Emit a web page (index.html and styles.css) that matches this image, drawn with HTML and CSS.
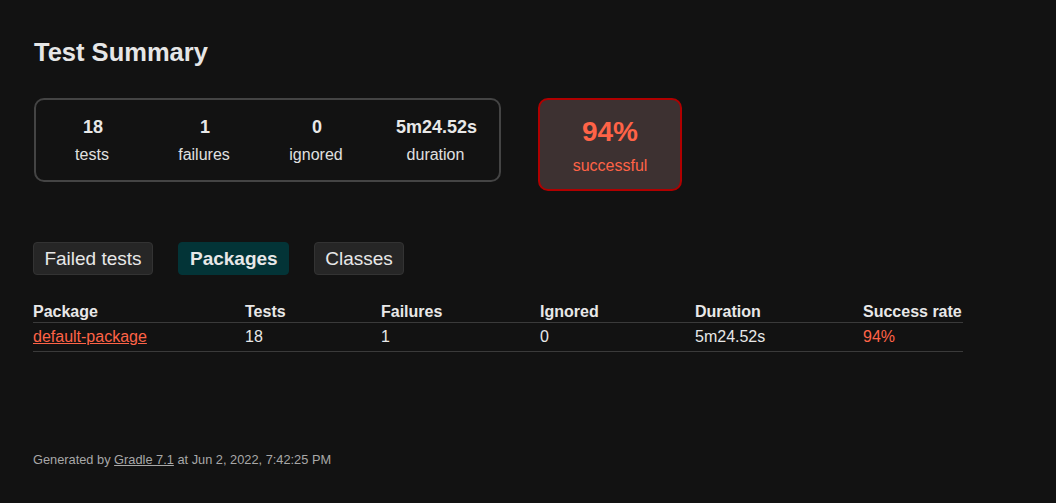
FILE: index.html
```html
<!DOCTYPE html>
<html>
<head>
<meta charset="utf-8">
<link rel="stylesheet" href="styles.css">
</head>
<body>
<div class="content">
  <h1 class="title">Test Summary</h1>
  <div class="summary-row">
    <div class="summary">
      <div class="info w1"><div class="counter">18</div><p>tests</p></div>
      <div class="info w1"><div class="counter">1</div><p>failures</p></div>
      <div class="info w1"><div class="counter">0</div><p>ignored</p></div>
      <div class="info w2"><div class="counter">5m24.52s</div><p>duration</p></div>
    </div>
    <div class="success">
      <div class="percent">94%</div>
      <p>successful</p>
    </div>
  </div>
  <div class="tabs">
    <span class="tab">Failed tests</span>
    <span class="tab active">Packages</span>
    <span class="tab">Classes</span>
  </div>
  <table class="pkg">
    <thead>
      <tr><th class="c1">Package</th><th class="c2">Tests</th><th class="c3">Failures</th><th class="c4">Ignored</th><th class="c5">Duration</th><th class="c6">Success rate</th></tr>
    </thead>
    <tbody>
      <tr><td><a class="link" href="#">default-package</a></td><td>18</td><td>1</td><td>0</td><td>5m24.52s</td><td class="fail">94%</td></tr>
    </tbody>
  </table>
  <p class="footer">Generated by <a class="gl" href="#">Gradle 7.1</a> at Jun 2, 2022, 7:42:25 PM</p>
</div>
</body>
</html>
```
FILE: styles.css
```css
html, body { margin: 0; padding: 0; background: #121212; }
body { font-family: "Liberation Sans", Arial, sans-serif; color: #e8e8e8; }
.content { padding: 33px 33px 0 33px; }
.title { margin: 0 0 0 1px; font-size: 25.5px; font-weight: bold; line-height: 38px; color: #e6e6e6; }
.summary-row { display: flex; align-items: flex-start; margin-top: 27px; gap: 37px; }
.summary { display: flex; margin-left: 1px; border: 2px solid #444; border-radius: 10px; width: 463px; height: 80px; box-sizing: content-box; }
.info { text-align: center; padding-top: 15px; }
.w1 { width: 112px; }
.w2 { width: 127px; }
.counter { font-size: 18px; font-weight: bold; line-height: 24px; margin-left: 2px; }
.info p { margin: 6px 0 0 0; font-size: 16px; line-height: 20px; color: #e0e0e0; }
.success { width: 140px; height: 89px; border: 2px solid #b00000; border-radius: 10px; background: #3d3131; color: #ff6347; text-align: center; box-sizing: content-box; }
.percent { font-size: 28px; font-weight: bold; line-height: 30px; margin-top: 17px; }
.success p { margin: 9px 0 0 0; font-size: 16px; line-height: 20px; }
.tabs { display: flex; gap: 25px; margin-top: 51px; }
.tab { display: inline-block; height: 33px; line-height: 32px; padding: 0 10px; box-sizing: border-box; font-size: 19px; background: #262626; border: 1px solid #333; border-radius: 4px; color: #e8e8e8; }
.tab:first-child { padding: 0 10px 0 10px; width: 120px; text-align: center; }
.tab.active { background: #033437; border-color: #033437; font-weight: bold; padding: 0 11px; width: 111px; text-align: center; }
.tab:last-child { width: 90px; text-align: center; }
.pkg { border-collapse: collapse; margin-top: 23px; width: 930px; font-size: 16px; }
.pkg th { text-align: left; font-weight: bold; padding: 4px 0 1px 0; line-height: 19px; border-bottom: 1px solid #3a3a3a; }
.pkg td { text-align: left; padding: 4px 0 5px 0; line-height: 19px; border-bottom: 1px solid #3a3a3a; }
.c1 { width: 212px; } .c2 { width: 136px; } .c3 { width: 159px; } .c4 { width: 155px; } .c5 { width: 168px; }
.link { color: #ff6347; text-decoration: underline; }
.fail { color: #ff6347; }
.footer { margin: 100px 0 0 0; font-size: 12.8px; color: #a8a8a8; }
.gl { color: #a8a8a8; text-decoration: underline; }
```
